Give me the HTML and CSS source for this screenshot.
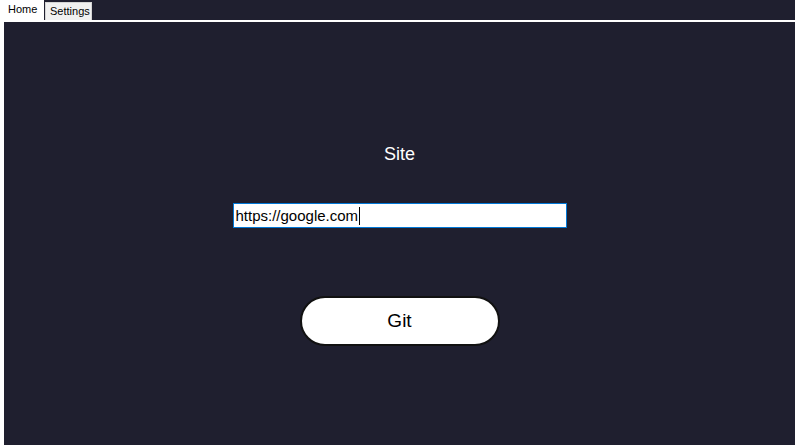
FILE: index.html
```html
<!DOCTYPE html>
<html lang="en">
<head>
<meta charset="utf-8">
<title>Site</title>
<link rel="stylesheet" href="styles.css">
</head>
<body>
<div class="tabs">
  <div class="tab tab-active">Home</div>
  <div class="tab tab-idle">Settings</div>
</div>
<main class="panel">
  <div class="label">Site</div>
  <div class="field"><span class="field-text">https://google.com</span><span class="caret"></span></div>
  <button class="btn" type="button">Git</button>
</main>
</body>
</html>
```

FILE: styles.css
```css
html, body {
  margin: 0;
  padding: 0;
  height: 100%;
}
body {
  background: #1f1f2f;
  font-family: "Liberation Sans", Arial, sans-serif;
  display: flex;
  flex-direction: column;
  overflow: hidden;
}
.tabs {
  display: flex;
  align-items: flex-start;
  height: 20px;
  flex: none;
}
.tab {
  font-size: 11px;
  color: #000;
  box-sizing: border-box;
}
.tab-active {
  background: #fff;
  width: 44px;
  height: 20px;
  line-height: 19px;
  padding: 0 0 0 8px;
}
.tab-idle {
  margin-top: 2px;
  margin-left: 1px;
  width: 47px;
  height: 18px;
  line-height: 15px;
  padding: 1px 0 0 4px;
  background: #f0f0f0;
  border: 1px solid #d4d4d4;
  border-bottom: none;
  white-space: nowrap;
  overflow: hidden;
}
.panel {
  flex: 1;
  border-top: 2px solid #fff;
  border-left: 4px solid #fff;
  display: flex;
  flex-direction: column;
  align-items: center;
  padding-top: 121px;
}
.label {
  color: #fff;
  font-size: 18px;
  line-height: 22px;
  height: 22px;
}
.field {
  margin-top: 38px;
  width: 334px;
  height: 25px;
  box-sizing: border-box;
  background: #fff;
  border: 1px solid #0078d7;
  display: flex;
  align-items: center;
  padding-left: 2px;
  font-size: 15px;
  color: #000;
}
.caret {
  display: inline-block;
  width: 1px;
  height: 18px;
  background: #000;
  margin-left: 1px;
}
.btn {
  margin-top: 68px;
  width: 200px;
  height: 50px;
  box-sizing: border-box;
  background: #fff;
  border: 2px solid #111;
  border-radius: 25px;
  font-family: "Liberation Sans", Arial, sans-serif;
  font-size: 19px;
  color: #000;
  padding: 0;
}
```
